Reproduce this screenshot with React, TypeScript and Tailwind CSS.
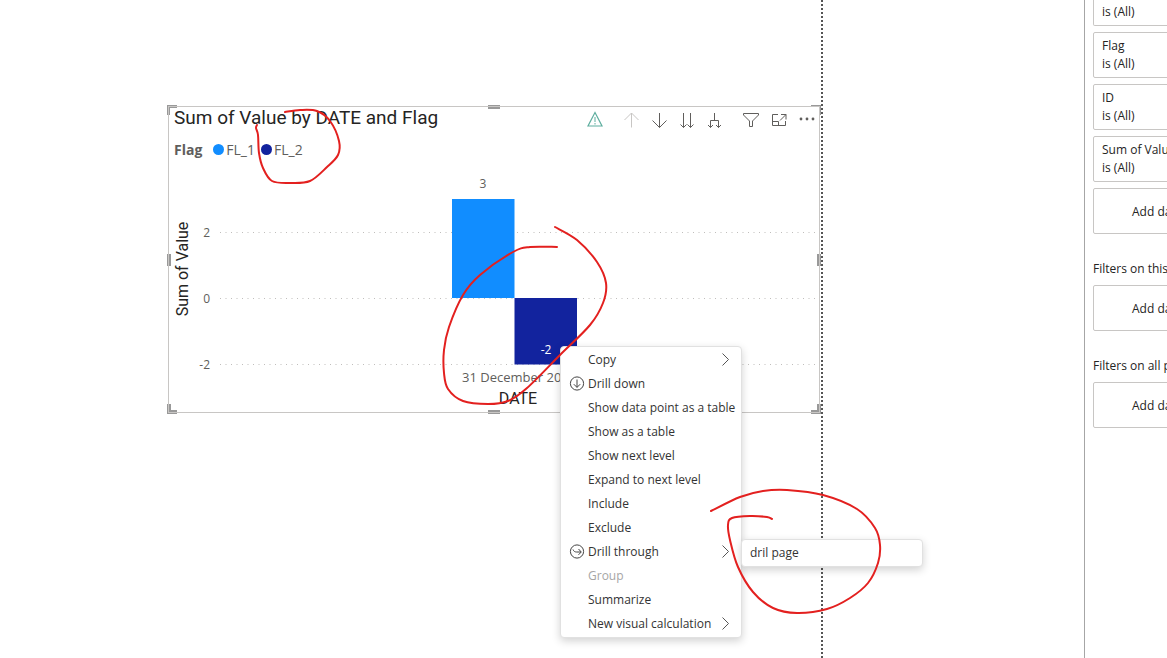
import { useState } from 'react';
import type { ReactNode } from 'react';

type Point = [number, number];

interface MenuItem {
  label: string;
  icon?: 'down' | 'through';
  submenu?: string[];
  hasMore?: boolean;
  disabled?: boolean;
}

const MENU_ITEMS: MenuItem[] = [
  { label: 'Copy', hasMore: true },
  { label: 'Drill down', icon: 'down' },
  { label: 'Show data point as a table' },
  { label: 'Show as a table' },
  { label: 'Show next level' },
  { label: 'Expand to next level' },
  { label: 'Include' },
  { label: 'Exclude' },
  { label: 'Drill through', icon: 'through', hasMore: true, submenu: ['dril page'] },
  { label: 'Group', disabled: true },
  { label: 'Summarize' },
  { label: 'New visual calculation', hasMore: true },
];

const LEGEND = [
  { label: 'FL_1', dot: 'bg-[#118dff]' },
  { label: 'FL_2', dot: 'bg-[#12239e]' },
];

const GRID_LINES = [
  { label: '2', y: 71 },
  { label: '0', y: 137 },
  { label: '-2', y: 203 },
];

// freehand marker strokes, in page coordinates
const STROKES: Point[][] = [
  [
    [285, 112], [300, 110], [317, 111], [330, 121], [339, 141], [338, 155], [327, 167], [310, 181],
    [290, 183], [272, 181], [263, 168], [259, 153], [258, 135], [256, 128], [257, 125],
  ],
  [
    [555, 227], [577, 240], [597, 262], [606, 283], [603, 303], [590, 325], [560, 355], [527, 388],
    [508, 401], [488, 404], [463, 401], [448, 389], [444, 373], [444, 350], [449, 327], [463, 295],
    [480, 275], [513, 252], [530, 247], [557, 247],
  ],
  [
    [711, 511], [740, 497], [763, 491], [787, 490], [823, 495], [857, 509], [875, 528], [880, 545],
    [878, 563], [868, 583], [850, 598], [827, 609], [797, 613], [773, 608], [753, 592], [738, 567],
    [730, 540], [728, 525], [732, 518], [750, 516], [767, 517], [772, 519],
  ],
];

// Catmull-Rom spline through the points
function smoothPath(pts: Point[]) {
  let d = `M${pts[0][0]} ${pts[0][1]}`;
  for (let i = 0; i < pts.length - 1; i++) {
    const p0 = pts[i - 1] ?? pts[i];
    const p1 = pts[i];
    const p2 = pts[i + 1];
    const p3 = pts[i + 2] ?? p2;
    d += `C${p1[0] + (p2[0] - p0[0]) / 6} ${p1[1] + (p2[1] - p0[1]) / 6} `;
    d += `${p2[0] - (p3[0] - p1[0]) / 6} ${p2[1] - (p3[1] - p1[1]) / 6} ${p2[0]} ${p2[1]}`;
  }
  return d;
}

interface ToolButtonProps {
  label: string;
  color?: string;
  className?: string;
  children: ReactNode;
}

function ToolButton({ label, color = 'text-[#605e5c]', className = '', children }: ToolButtonProps) {
  return (
    <button aria-label={label} className={`flex h-5 w-5 items-center justify-center ${color} ${className}`}>
      <svg width="20" height="20" viewBox="0 0 20 20" fill="none" stroke="currentColor" strokeWidth="1">
        {children}
      </svg>
    </button>
  );
}

function VisualToolbar() {
  return (
    <div className="flex items-center gap-2">
      <ToolButton label="Warning" color="text-[#5fae9f]" className="mr-2">
        <path d="M10 3.5 17 17H3Z" strokeWidth="1.2" />
        <path d="M10 8v5M10 14v1.500" />
      </ToolButton>
      <ToolButton label="Drill up" color="text-[#c8c6c4]">
        <path d="M10.500 18.500V4M3.500 11l7-7 7 7" />
      </ToolButton>
      <ToolButton label="Drill down">
        <path d="M10.500 4v14.500M3.500 11.500l7 7 7-7" />
      </ToolButton>
      <ToolButton label="Go to the next level">
        <path d="M6.500 4v14.500M3.500 15.500l3 3 3-3M13.500 4v14.500M10.500 15.500l3 3 3-3" />
      </ToolButton>
      <ToolButton label="Expand all down one level">
        <path d="M9.500 4v7.500M5.500 18.500v-7h8v7M3 16l2.500 2.500L8 16M11 16l2.500 2.500L16 16" />
      </ToolButton>
      <ToolButton label="Filters" className="ml-2">
        <path d="M2.500 4.500h15v1.500l-6 6v5.500h-3V12l-6-6Z" />
      </ToolButton>
      <ToolButton label="Focus mode">
        <path d="M9 5.500H3.500v11h13V12M3.500 12.500h6v4M12 5.500h5v5M11 11.500l6-6" />
      </ToolButton>
      <ToolButton label="More options">
        <g fill="currentColor" stroke="none">
          <circle cx="4" cy="10" r="1.400" />
          <circle cx="10" cy="10" r="1.400" />
          <circle cx="16" cy="10" r="1.400" />
        </g>
      </ToolButton>
    </div>
  );
}

function ColumnChart() {
  return (
    <svg viewBox="0 0 650 250" className="block w-full" role="img" aria-label="Sum of Value by DATE and Flag">
      {GRID_LINES.map((line) => (
        <g key={line.label}>
          <line x1="51" x2="646" y1={line.y - 0.5} y2={line.y - 0.5} stroke="#c0bebc" strokeDasharray="1 4.5" />
          <text x="41" y={line.y + 4} textAnchor="end" className="fill-[#605e5c] text-[12px]">
            {line.label}
          </text>
        </g>
      ))}
      <rect x="283" y="37" width="62.5" height="99" fill="#118dff" />
      <rect x="345.5" y="136" width="62.5" height="66.5" fill="#12239e" />
      <text x="314" y="26" textAnchor="middle" className="fill-[#605e5c] text-[12px]">3</text>
      <text x="377" y="192" textAnchor="middle" className="fill-white text-[12px]">-2</text>
      <text x="293" y="220" className="fill-[#605e5c] text-[13px]">31 December 2020</text>
      <text x="349" y="242" textAnchor="middle" className="fill-[#252423] font-['Roboto',sans-serif] text-[16px]">
        DATE
      </text>
      <text
        transform="translate(19 107) rotate(-90)"
        textAnchor="middle"
        className="fill-[#252423] font-['Roboto',sans-serif] text-[16px]"
      >
        Sum of Value
      </text>
    </svg>
  );
}

// selection handles on the frame of the visual
function ResizeHandles() {
  return (
    <div className="pointer-events-none absolute -inset-[2px]">
      <i className="absolute top-0 left-0 h-[10px] w-[10px] border-t-3 border-l-3 border-[#999]" />
      <i className="absolute top-0 right-0 h-[10px] w-[10px] border-t border-r border-[#999]" />
      <i className="absolute bottom-0 left-0 h-[10px] w-[10px] border-b-4 border-l-4 border-[#999]" />
      <i className="absolute right-0 bottom-0 h-[10px] w-[10px] border-r-4 border-b-4 border-[#999]" />
      <i className="absolute top-0 left-1/2 h-1 w-3 -translate-x-1/2 bg-[#999]" />
      <i className="absolute bottom-0 left-1/2 h-1 w-3 -translate-x-1/2 bg-[#999]" />
      <i className="absolute top-1/2 left-0 h-3 w-1 -translate-y-1/2 bg-[#999]" />
      <i className="absolute top-1/2 right-0 h-3 w-1 -translate-y-1/2 bg-[#999]" />
      <div className="absolute inset-[2px] outline outline-[#c8c6c4]" />
    </div>
  );
}

function MenuIcon({ kind }: { kind: 'down' | 'through' }) {
  return (
    <svg width="16" height="16" viewBox="0 0 16 16" fill="none" stroke="#444" strokeWidth="1">
      <circle cx="8" cy="7.500" r="6.600" />
      {kind === 'down' ? (
        <path d="M8 3.500v7.800M4.800 8.200 8 11.400l3.200-3.200" />
      ) : (
        <path d="M4 5.500c.6 1.800 2 2.500 3.500 2.500h4.500M9.500 5l2.800 3-2.800 2.800" />
      )}
    </svg>
  );
}

function ContextMenu() {
  const [openItem, setOpenItem] = useState('Drill through');

  return (
    <ul className="absolute top-[239px] left-[391px] z-10 w-[182px] rounded border border-[#e1e1e1] bg-white py-px text-[12px] text-[#333] shadow-[0_3px_8px_rgba(0,0,0,0.18)]">
      {MENU_ITEMS.map((item) => (
        <li key={item.label} className="relative">
          <button
            disabled={item.disabled}
            onClick={() => setOpenItem(item.label)}
            className="flex h-6 w-full items-center px-2 text-left whitespace-nowrap disabled:text-[#a6a6a6]"
          >
            <span className="w-[19px] shrink-0">{item.icon && <MenuIcon kind={item.icon} />}</span>
            <span className="flex-1">{item.label}</span>
            {item.hasMore && (
              <svg width="14" height="14" viewBox="0 0 14 14" fill="none" stroke="#555" strokeWidth="1">
                <path d="M3.500 0.500l6 6-6 6" />
              </svg>
            )}
          </button>
          {item.submenu && openItem === item.label && (
            <ul className="absolute -top-px left-full w-[182px] rounded border border-[#e1e1e1] bg-white py-px shadow-[0_3px_8px_rgba(0,0,0,0.18)]">
              {item.submenu.map((page) => (
                <li key={page}>
                  <button className="flex h-6 w-full items-center px-2 text-left">{page}</button>
                </li>
              ))}
            </ul>
          )}
        </li>
      ))}
    </ul>
  );
}

function FilterCard({ name }: { name: string }) {
  return (
    <div className="rounded-[2px] border border-[#c8c6c4] px-2 py-1">
      <div>{name}</div>
      <div>is (All)</div>
    </div>
  );
}

function AddFields() {
  return (
    <button className="block h-[46px] w-full rounded-[2px] border border-[#c8c6c4] pt-[2px] pl-[38px] text-left">
      Add data fields here
    </button>
  );
}

function FilterPane() {
  return (
    <aside className="w-[83px] shrink-0 overflow-hidden border-l border-[#a6a6a6] pl-2 text-[12px] leading-[18px] whitespace-nowrap text-[#252423]">
      <div className="w-[182px]">
        <div className="flex flex-col gap-[6px]">
          <div className="rounded-b-[2px] border border-t-0 border-[#c8c6c4] px-2 pt-[3px] pb-1">is (All)</div>
          <FilterCard name="Flag" />
          <FilterCard name="ID" />
          <FilterCard name="Sum of Value" />
          <AddFields />
        </div>
        <h2 className="mt-[26px] mb-[7px]">Filters on this page</h2>
        <AddFields />
        <h2 className="mt-[26px] mb-[7px]">Filters on all pages</h2>
        <AddFields />
      </div>
    </aside>
  );
}

export default function App() {
  return (
    <div className="relative flex min-h-screen overflow-hidden bg-white font-['Open_Sans',sans-serif]">
      <main className="flex flex-1">
        <div className="flex-1 pt-[106px] pr-px pl-[168px]">
          <section className="relative border border-[#c8c6c4]">
            <header className="flex h-6 items-start justify-between pr-[2px] pl-[5px]">
              <h1 className="font-['Roboto',sans-serif] text-[19px] leading-[22px] text-[#252423]">
                Sum of Value by DATE and Flag
              </h1>
              <div className="pt-[2px]">
                <VisualToolbar />
              </div>
            </header>
            <div className="mt-[6px] flex h-6 items-center pl-[5px] text-[14px] text-[#605e5c]">
              <span className="mr-[11px] font-bold">Flag</span>
              {LEGEND.map((entry) => (
                <span key={entry.label} className="mr-[6px] flex items-center gap-[2px]">
                  <i className={`h-[11px] w-[11px] rounded-full ${entry.dot}`} />
                  {entry.label}
                </span>
              ))}
            </div>
            <div className="pt-px">
              <ColumnChart />
            </div>
            <ResizeHandles />
            <ContextMenu />
          </section>
        </div>
        {/* edge of the report page */}
        <div className="w-[2px] bg-[repeating-linear-gradient(to_bottom,#555_0_2px,transparent_2px_4px)]" />
        <div className="w-[261px]" />
      </main>
      <FilterPane />
      <svg className="pointer-events-none absolute top-0 left-0 z-20" width="1084" height="658" fill="none">
        {STROKES.map((points, i) => (
          <path key={i} d={smoothPath(points)} stroke="#e3201f" strokeWidth="2" strokeLinecap="round" />
        ))}
      </svg>
    </div>
  );
}
